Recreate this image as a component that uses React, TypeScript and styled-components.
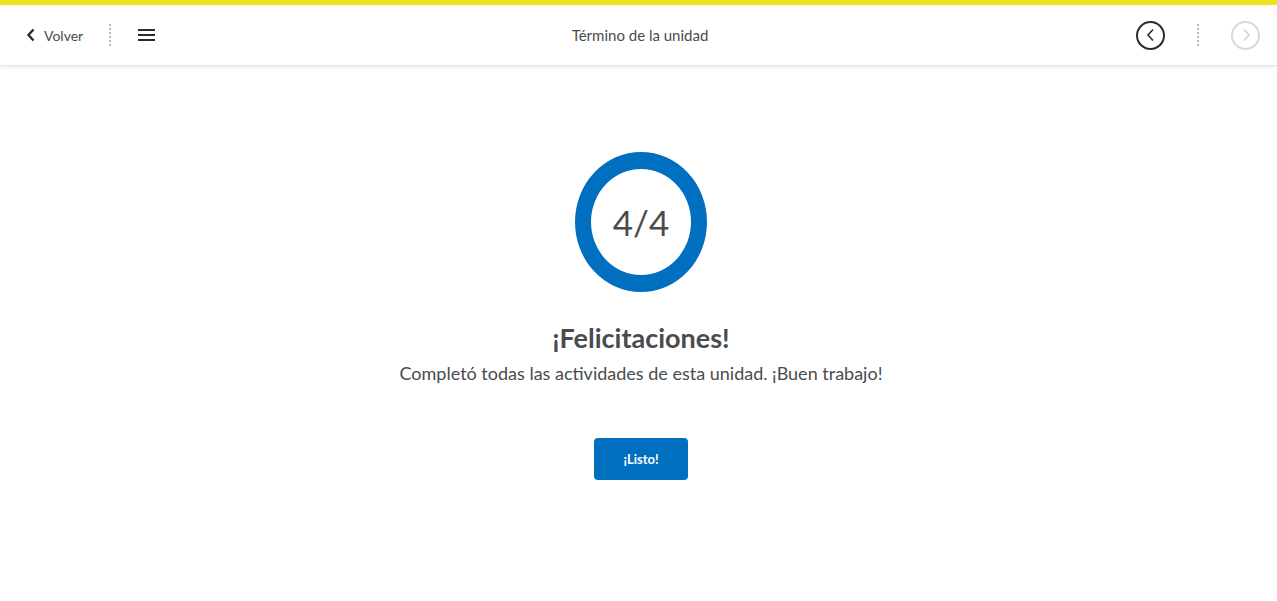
import styled, { createGlobalStyle } from 'styled-components'

const GlobalStyle = createGlobalStyle`
  html, body {
    margin: 0;
    padding: 0;
    background: #ffffff;
    font-family: Lato, "Noto Sans", sans-serif;
    color: #494c4e;
  }
`

const Page = styled.div`
  display: flex;
  flex-direction: column;
  min-height: 601px;
`

const AccentBar = styled.div`
  height: 5px;
  background: #ede51c;
`

const Header = styled.header`
  display: grid;
  grid-template-columns: 1fr auto 1fr;
  align-items: center;
  height: 60px;
  padding: 0 17px 0 20px;
  border-bottom: 1px solid #e3e3e3;
  box-shadow: 0 2px 3px rgba(0, 0, 0, 0.06);
`

const Group = styled.div<{ $end?: boolean }>`
  display: flex;
  align-items: center;
  justify-content: ${p => (p.$end ? 'flex-end' : 'flex-start')};
  gap: ${p => (p.$end ? '22px' : '0')};
`

const BackLink = styled.a`
  display: flex;
  align-items: center;
  gap: 8px;
  padding: 0 6px;
  font-size: 14px;
  color: #494c4e;
  text-decoration: none;
`

const Divider = styled.span<{ $margin: string }>`
  display: block;
  width: 0;
  height: 22px;
  border-left: 2px dotted #b5b8bb;
  margin: ${p => p.$margin};
`

const MenuButton = styled.button`
  display: flex;
  align-items: center;
  background: none;
  border: none;
  padding: 0;
  cursor: pointer;
`

const Title = styled.div`
  font-size: 15px;
  color: #494c4e;
`

const CircleButton = styled.button<{ $disabled?: boolean }>`
  display: flex;
  align-items: center;
  justify-content: center;
  width: 29px;
  height: 29px;
  border-radius: 50%;
  border: 2px solid ${p => (p.$disabled ? '#d6d8da' : '#2a2c2e')};
  background: #fff;
  padding: 0;
  box-sizing: border-box;
  color: ${p => (p.$disabled ? '#cdd0d2' : '#2a2c2e')};
`

const Main = styled.main`
  display: flex;
  flex-direction: column;
  align-items: center;
  padding: 86px 0 0 5px;
`

const Ring = styled.div`
  display: flex;
  align-items: center;
  justify-content: center;
  width: 132px;
  height: 140px;
  box-sizing: border-box;
  border-style: solid;
  border-color: #006fbf;
  border-width: 17px 16px;
  border-radius: 50%;
  font-size: 35px;
  font-weight: 400;
  color: #494c4e;
`

const Heading = styled.h1`
  margin: 28px 0 0;
  font-size: 27px;
  line-height: 36px;
  font-weight: 700;
  color: #494c4e;
`

const Message = styled.p`
  margin: 0;
  font-size: 18px;
  line-height: 34px;
  color: #494c4e;
`

const DoneButton = styled.button`
  margin-top: 48px;
  width: 94px;
  height: 42px;
  border: none;
  border-radius: 4px;
  background: #006fbf;
  color: #fff;
  font-family: Lato, "Noto Sans", sans-serif;
  font-size: 13px;
  font-weight: 700;
  cursor: pointer;
`

const App = () => (
  <>
    <GlobalStyle />
    <Page>
      <AccentBar />
      <Header>
        <Group>
          <BackLink href="#">
            <svg width="10" height="14" viewBox="0 0 10 14">
              <path d="M7.5 1.5 L2.5 7 L7.5 12.5" fill="none" stroke="#2a2c2e" strokeWidth="2.4" />
            </svg>
            Volver
          </BackLink>
          <Divider $margin="0 27px 0 20px" />
          <MenuButton aria-label="Menú">
            <svg width="17" height="14" viewBox="0 0 17 14">
              <rect x="0" y="1" width="17" height="2" fill="#2a2c2e" />
              <rect x="0" y="6" width="17" height="2" fill="#2a2c2e" />
              <rect x="0" y="11" width="17" height="2" fill="#2a2c2e" />
            </svg>
          </MenuButton>
        </Group>
        <Title>Término de la unidad</Title>
        <Group $end>
          <CircleButton aria-label="Anterior">
            <svg width="12" height="14" viewBox="0 0 12 14">
              <path d="M8 1.5 L3 7 L8 12.5" fill="none" stroke="currentColor" strokeWidth="1.6" />
            </svg>
          </CircleButton>
          <Divider $margin="0 10px" />
          <CircleButton $disabled aria-label="Siguiente">
            <svg width="12" height="14" viewBox="0 0 12 14">
              <path d="M4 1.5 L9 7 L4 12.5" fill="none" stroke="currentColor" strokeWidth="1.6" />
            </svg>
          </CircleButton>
        </Group>
      </Header>
      <Main>
        <Ring>4/4</Ring>
        <Heading>¡Felicitaciones!</Heading>
        <Message>Completó todas las actividades de esta unidad. ¡Buen trabajo!</Message>
        <DoneButton>¡Listo!</DoneButton>
      </Main>
    </Page>
  </>
)

export default App
